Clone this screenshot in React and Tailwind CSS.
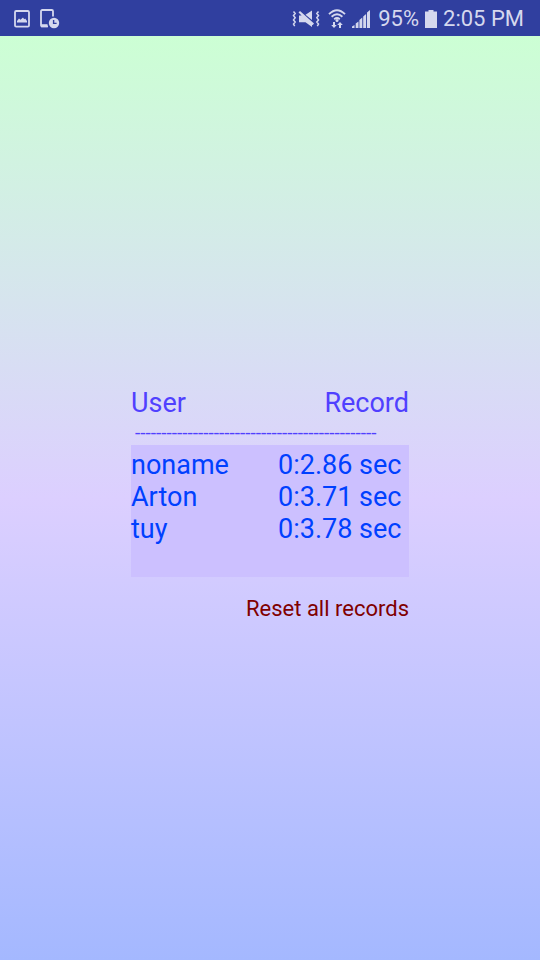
const records = [
  { user: "noname", time: "0:2.86 sec" },
  { user: "Arton", time: "0:3.71 sec" },
  { user: "tuy", time: "0:3.78 sec" },
];

const divider = "-".repeat(46);

function PictureIcon() {
  return (
    <svg width="16" height="18" viewBox="0 0 16 18" fill="none" aria-hidden="true">
      <rect x="1" y="1" width="14" height="15.6" rx="1.2" stroke="currentColor" strokeWidth="1.8" />
      <path d="M3 12.6V11l2-2.6 1.5 1.3L9 7.6l1.2 1.6 1-.8L13 11v1.6z" fill="currentColor" />
    </svg>
  );
}

function PhoneClockIcon() {
  return (
    <svg width="20" height="20" viewBox="0 0 20 20" fill="none" aria-hidden="true">
      <path d="M8 17.4H2.2A1.2 1.2 0 0 1 1 16.2V2.2A1.2 1.2 0 0 1 2.2 1h9.6A1.2 1.2 0 0 1 13 2.2V7.5" stroke="currentColor" strokeWidth="1.8" />
      <path d="M1 15.2h6.500v3H1z" fill="currentColor" />
      <circle cx="14" cy="14" r="5.2" fill="currentColor" />
      <path d="M13.6 11v3.4h3" stroke="#303f9f" strokeWidth="1.4" />
    </svg>
  );
}

function MuteVibrateIcon() {
  return (
    <svg width="28" height="18" viewBox="0 0 28 18" fill="none" aria-hidden="true">
      <path d="M1.5 1.5l1.700 2-1.700 2 1.700 2.200-1.700 2.200 1.700 2.200-1.700 2 1.200 2M26.500 1.500l-1.700 2 1.700 2-1.700 2.200 1.700 2.200-1.700 2.200 1.700 2-1.200 2" stroke="currentColor" strokeWidth="1.5" />
      <path d="M20 .5v9.500L13.500 4.800z" fill="currentColor" />
      <path d="M6.500 2.500L8 1l14 12.600-1.400 1.600-.6-.5V17l-6.500-4.700H7V5.500h2.600z" fill="currentColor" />
    </svg>
  );
}

function WifiIcon() {
  return (
    <svg width="18" height="20" viewBox="0 0 18 20" fill="none" aria-hidden="true">
      <path d="M1 5.200Q9-2.800 17 5.200M3.600 7.800q5.400-5 10.800 0M6.200 10.200q2.800-2.200 5.600 0" stroke="currentColor" strokeWidth="1.9" />
      <circle cx="9" cy="11.4" r="1.5" fill="currentColor" />
      <path d="M5 13h2v3h1.800L6 19l-2.800-3H5zM11 19h2v-3h1.800L12 13l-2.800 3H11z" fill="currentColor" />
    </svg>
  );
}

function SignalIcon() {
  return (
    <svg width="18" height="18" viewBox="0 0 18 18" fill="currentColor" aria-hidden="true">
      <path d="M0 18v-1.500L2.500 15v3zM3.700 18v-4.500L6.500 11.500V18zM7.400 18v-8L10.300 7.500V18zM11.200 18V6.500L14.100 4v14zM15 18V2.500L18 0v18z" />
    </svg>
  );
}

function BatteryIcon() {
  return (
    <svg width="12" height="18" viewBox="0 0 12 18" fill="currentColor" aria-hidden="true">
      <path d="M3.500 0h5v1.500H12V18H0V1.500h3.500z" />
    </svg>
  );
}

function StatusBar() {
  return (
    <header className="flex h-9 items-center justify-between bg-[#303f9f] pt-0.5 pr-4 pl-3.5 text-[#d5d8ee]">
      <div className="flex items-center gap-2.5">
        <PictureIcon />
        <PhoneClockIcon />
      </div>
      <div className="flex items-center text-[22px] leading-8">
        <MuteVibrateIcon />
        <span className="ml-2"><WifiIcon /></span>
        <span className="ml-1.5"><SignalIcon /></span>
        <span className="ml-2">95%</span>
        <span className="ml-1.5"><BatteryIcon /></span>
        <span className="ml-1.5">2:05 PM</span>
      </div>
    </header>
  );
}

export default function App() {
  return (
    <div className="flex min-h-screen flex-col font-[Roboto,sans-serif]">
      <StatusBar />
      <main className="flex flex-1 flex-col items-center justify-center bg-linear-to-b from-[#ccffd4] via-[#dccfff] to-[#a4b8ff] pt-3.5">
        <div className="flex w-[278px] flex-col">
          <table className="w-full table-fixed border-collapse text-[27px] leading-8">
            <thead className="text-[#5040ff]">
              <tr>
                <th scope="col" className="w-[147px] p-0 text-left font-normal">User</th>
                <th scope="col" className="p-0 text-right font-normal">Record</th>
              </tr>
              <tr aria-hidden="true">
                <td colSpan={2} className="pt-0.5 pr-0 pb-0 pl-1 text-[19px] leading-6 whitespace-nowrap">{divider}</td>
              </tr>
            </thead>
            <tbody className="bg-[#ccc0ff] text-[#0040ff]">
              {records.map((record) => (
                <tr key={record.user} className="group">
                  <td className="p-0 group-first:pt-1 group-last:pb-8">{record.user}</td>
                  <td className="p-0 group-first:pt-1 group-last:pb-8">{record.time}</td>
                </tr>
              ))}
            </tbody>
          </table>
          <button type="button" className="mt-4.5 self-end text-[22px] leading-7 text-[#800000]">
            Reset all records
          </button>
        </div>
      </main>
    </div>
  );
}
